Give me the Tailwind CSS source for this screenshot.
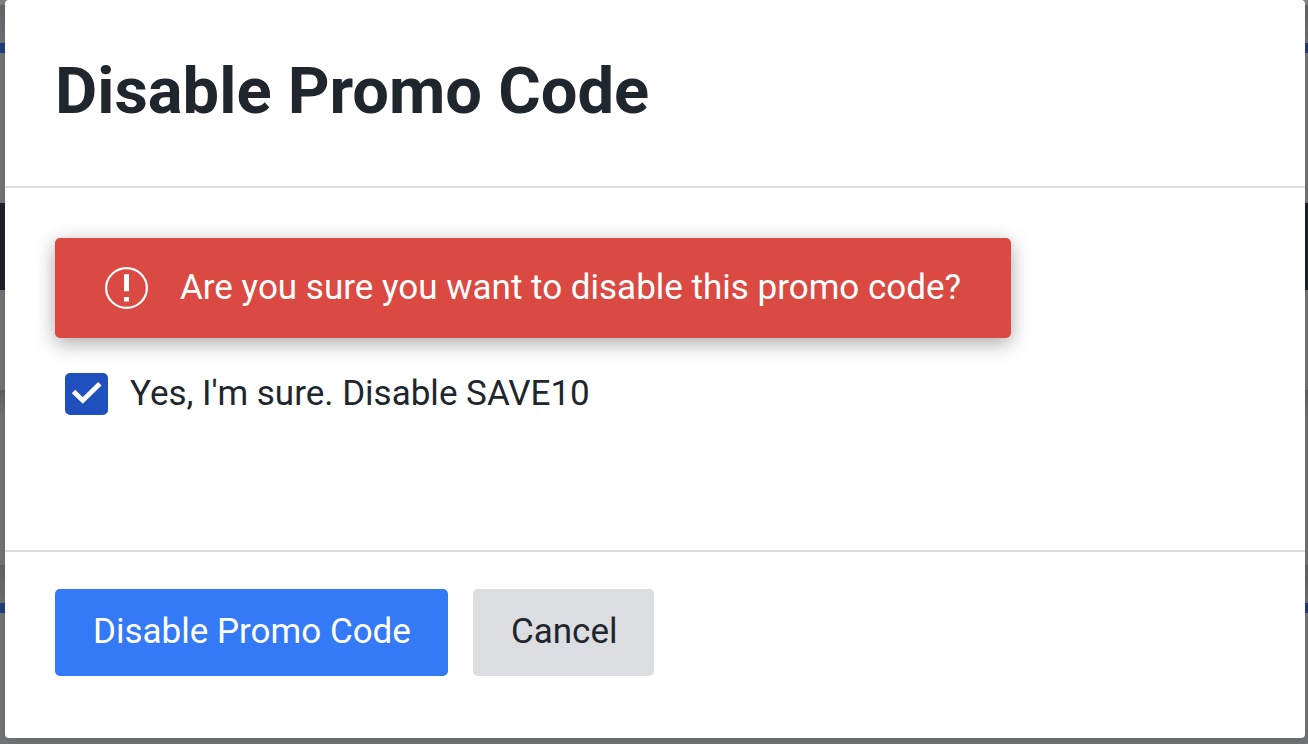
<!doctype html>
<html lang="en">
    <head>
        <meta charset="UTF-8" />
        <meta name="viewport" content="width=device-width, initial-scale=1.0" />
        <title>Disable Promo Code</title>
        <script src="https://cdn.jsdelivr.net/npm/@tailwindcss/browser@4"></script>
    </head>
    <body
        class="grid min-h-screen bg-[#6c6d6f] font-['Roboto',sans-serif] text-[35px] text-[#20262d]"
    >
        <!-- Dimmed page behind the dialog -->
        <div class="col-start-1 row-start-1 flex flex-col" aria-hidden="true">
            <div class="h-[5px] bg-[#828385]"></div>
            <div class="h-[38px] bg-linear-to-b from-[#67686a] to-[#747578]"></div>
            <div class="h-[10px] bg-[#204080]"></div>
            <div class="h-[150px] bg-[#767779]"></div>
            <div class="h-[87px] bg-[#1e222b]"></div>
            <div class="h-[100px] bg-[#767779]"></div>
            <div class="h-[175px] bg-linear-to-b from-[#636467] via-[#757678] via-15% to-[#757678]"></div>
            <div class="h-[38px] bg-linear-to-b from-[#636466] to-[#717274]"></div>
            <div class="h-[10px] bg-[#204080]"></div>
            <div class="grow bg-[#767779]"></div>
        </div>

        <!-- Dialog -->
        <div class="col-start-1 row-start-1 flex pr-[3px] pb-1.5 pl-[5px]">
            <div
                role="dialog"
                aria-labelledby="dialog-title"
                class="flex grow flex-col rounded-sm bg-white shadow-[0_4px_16px_rgba(0,0,0,0.15)]"
            >
                <div class="border-b-2 border-[#dcdde1] px-[50px] pt-[51px] pb-[55px]">
                    <h1 id="dialog-title" class="text-[65px] leading-20 font-bold">
                        Disable Promo Code
                    </h1>
                </div>

                <div class="grow px-[50px] py-[50px]">
                    <div
                        role="alert"
                        class="flex w-fit items-center gap-8 rounded-[5px] bg-[#da4a43] px-[50px] py-[26px] text-white shadow-[0_5px_20px_rgba(0,0,0,0.35)]"
                    >
                        <svg
                            class="h-[42px] w-[43px] shrink-0"
                            viewBox="0 0 43 42"
                            fill="none"
                            aria-hidden="true"
                        >
                            <ellipse cx="21.500" cy="21" rx="20.400" ry="19.900" stroke="currentColor" stroke-width="2.200" />
                            <path d="M19 7.300h5v17h-5zM19 30h5v4.500h-5z" fill="currentColor" />
                        </svg>
                        <p class="leading-12">
                            Are you sure you want to disable this promo code?
                        </p>
                    </div>

                    <label class="mt-8 ml-2.5 flex w-fit items-center gap-[22px] leading-12">
                        <span class="grid">
                            <input
                                type="checkbox"
                                checked
                                class="peer col-start-1 row-start-1 h-[42px] w-[43px] appearance-none rounded-[5px] border-2 border-[#204fbe] bg-white checked:bg-[#204fbe]"
                            />
                            <svg
                                class="pointer-events-none invisible col-start-1 row-start-1 h-[42px] w-[43px] peer-checked:visible"
                                viewBox="0 0 43 42"
                                fill="none"
                                aria-hidden="true"
                            >
                                <path d="M8.500 18.500 17.800 27.500 34.800 10.700" stroke="white" stroke-width="4.800" />
                            </svg>
                        </span>
                        Yes, I'm sure. Disable SAVE10
                    </label>
                </div>

                <div class="flex gap-[25px] border-t-2 border-[#dcdde1] px-[50px] pt-[37px] pb-[62px]">
                    <button
                        type="button"
                        class="rounded-[5px] bg-[#3479f6] pt-[19px] pr-[37px] pb-5 pl-[38px] leading-12 text-white hover:bg-[#204fbe]"
                    >
                        Disable Promo Code
                    </button>
                    <button
                        type="button"
                        class="rounded-[5px] bg-[#dcdde1] pt-[19px] pr-[37px] pb-5 pl-[38px] leading-12 hover:bg-[#c8cace]"
                    >
                        Cancel
                    </button>
                </div>
            </div>
        </div>
    </body>
</html>
